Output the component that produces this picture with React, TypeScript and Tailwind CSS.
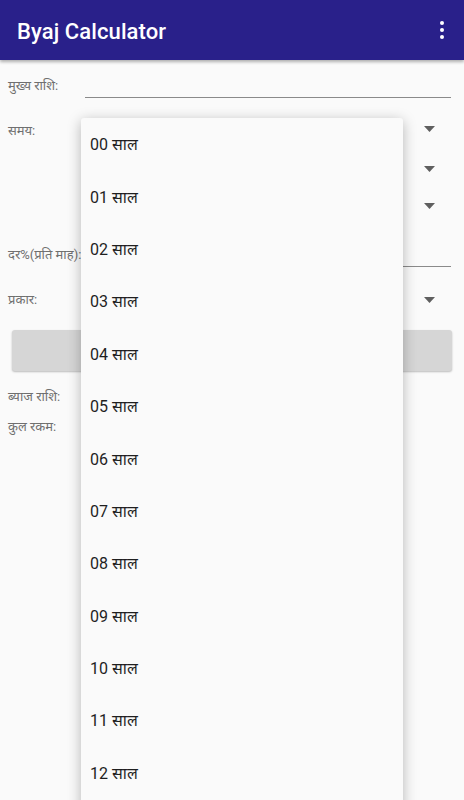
import React from "react";

const font = { fontFamily: 'Roboto, "Noto Sans", "Noto Sans Devanagari", sans-serif' };

function Arrow() {
  return (
    <svg width="11" height="6" viewBox="0 0 11 6" className="block">
      <path d="M0 0 L11 0 L5.5 6 Z" fill="#5f5f5f" />
    </svg>
  );
}

const items = Array.from({ length: 13 }, (_, i) => `${String(i).padStart(2, "0")} साल`);

export default function App() {
  return (
    <div className="relative w-[464px] h-[800px] overflow-hidden bg-[#fafafa]" style={font}>
      <div className="relative z-10 h-[60px] bg-[#29208a] flex items-center justify-between pl-[17px] pr-[20px] pt-[2px] shadow-[0_2px_3px_rgba(0,0,0,0.3)]">
        <span className="text-white text-[22px] font-medium tracking-[0.1px]">Byaj Calculator</span>
        <div className="flex flex-col gap-[2.5px] items-center mb-[2px]">
          <span className="w-[4.5px] h-[4.5px] rounded-full bg-white" />
          <span className="w-[4.5px] h-[4.5px] rounded-full bg-white" />
          <span className="w-[4.5px] h-[4.5px] rounded-full bg-white" />
        </div>
      </div>

      <div className="flex flex-col text-[13px] text-[#6f6f6f]">
        <div className="mt-[4px] h-[44px] flex items-center pl-[8px] pr-[13px]">
          <span className="w-[77px]">मुख्य राशि:</span>
          <div className="flex-1 h-[23px] border-b border-[#8a8a8a]" />
        </div>
        <div className="h-[42px] flex items-center pl-[8px] pr-[29px]">
          <span className="flex-1 pt-[4px]">समय:</span>
          <Arrow />
        </div>
        <div className="h-[37px] flex items-center justify-end pr-[29px]">
          <Arrow />
        </div>
        <div className="h-[38px] flex items-center justify-end pr-[29px]">
          <Arrow />
        </div>
        <div className="h-[60px] flex items-center pl-[8px] pr-[13px]">
          <span className="w-[77px] whitespace-nowrap">दर%(प्रति माह):</span>
          <div className="flex-1 h-[23px] border-b border-[#8a8a8a]" />
        </div>
        <div className="h-[30px] flex items-center pl-[8px] pr-[29px]">
          <span className="flex-1">प्रकार:</span>
          <Arrow />
        </div>
        <div className="mt-[15px] mx-[12px] h-[41px] rounded-[3px] bg-[#d6d6d6] shadow-[0_1px_2px_rgba(0,0,0,0.25)]" />
        <div className="mt-[14px] h-[24px] flex items-center pl-[8px]">ब्याज राशि:</div>
        <div className="mt-[6px] h-[24px] flex items-center pl-[8px]">कुल रकम:</div>
      </div>

      <div className="absolute z-20 left-[81px] top-[118px] w-[322px] h-[700px] bg-[#fafafa] rounded-[3px] shadow-[0_3px_14px_rgba(0,0,0,0.28)] pt-[1px]">
        {items.map((t) => (
          <div key={t} className="h-[52.4px] flex items-center pl-[9px] text-[16px] text-[#1f1f1f]">
            {t}
          </div>
        ))}
      </div>
    </div>
  );
}
